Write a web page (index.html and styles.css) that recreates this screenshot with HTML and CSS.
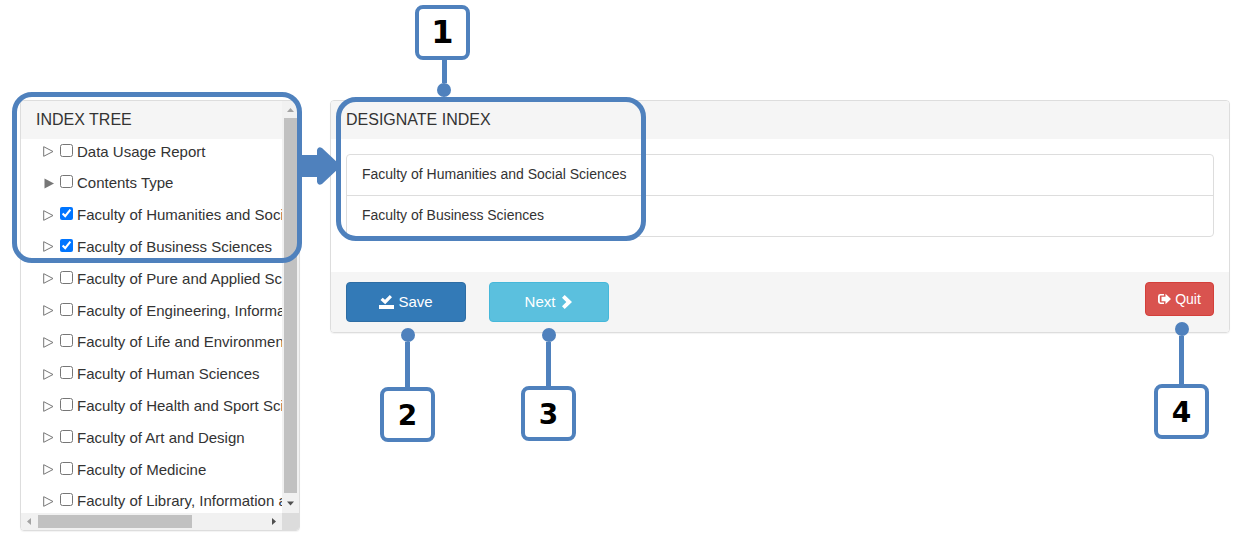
FILE: index.html
```
<!DOCTYPE html>
<html lang="en">
<head>
<meta charset="utf-8">
<title>Designate Index</title>
<link rel="stylesheet" href="styles.css">
</head>
<body>
<main class="page">
  <section class="panel tree">
    <div class="tree-view">
      <h2 class="panel-title">INDEX TREE</h2>
      <ul class="tree-list">
        <li class="node"><svg class="caret" viewBox="0 0 11 11"><path d="M.7 .7V10.3L10 5.5Z"/></svg><input type="checkbox" id="n1"><label for="n1">Data Usage Report</label></li>
        <li class="node"><svg class="caret solid" viewBox="0 0 11 11"><path d="M1.5 .5V10.5L11 5.5Z"/></svg><input type="checkbox" id="n2"><label for="n2">Contents Type</label></li>
        <li class="node"><svg class="caret" viewBox="0 0 11 11"><path d="M.7 .7V10.3L10 5.5Z"/></svg><input type="checkbox" id="n3" checked><label for="n3">Faculty of Humanities and Social Sciences</label></li>
        <li class="node"><svg class="caret" viewBox="0 0 11 11"><path d="M.7 .7V10.3L10 5.5Z"/></svg><input type="checkbox" id="n4" checked><label for="n4">Faculty of Business Sciences</label></li>
        <li class="node"><svg class="caret" viewBox="0 0 11 11"><path d="M.7 .7V10.3L10 5.5Z"/></svg><input type="checkbox" id="n5"><label for="n5">Faculty of Pure and Applied Sciences</label></li>
        <li class="node"><svg class="caret" viewBox="0 0 11 11"><path d="M.7 .7V10.3L10 5.5Z"/></svg><input type="checkbox" id="n6"><label for="n6">Faculty of Engineering, Information and Systems</label></li>
        <li class="node"><svg class="caret" viewBox="0 0 11 11"><path d="M.7 .7V10.3L10 5.5Z"/></svg><input type="checkbox" id="n7"><label for="n7">Faculty of Life and Environmental Sciences</label></li>
        <li class="node"><svg class="caret" viewBox="0 0 11 11"><path d="M.7 .7V10.3L10 5.5Z"/></svg><input type="checkbox" id="n8"><label for="n8">Faculty of Human Sciences</label></li>
        <li class="node"><svg class="caret" viewBox="0 0 11 11"><path d="M.7 .7V10.3L10 5.5Z"/></svg><input type="checkbox" id="n9"><label for="n9">Faculty of Health and Sport Sciences</label></li>
        <li class="node"><svg class="caret" viewBox="0 0 11 11"><path d="M.7 .7V10.3L10 5.5Z"/></svg><input type="checkbox" id="n10"><label for="n10">Faculty of Art and Design</label></li>
        <li class="node"><svg class="caret" viewBox="0 0 11 11"><path d="M.7 .7V10.3L10 5.5Z"/></svg><input type="checkbox" id="n11"><label for="n11">Faculty of Medicine</label></li>
        <li class="node"><svg class="caret" viewBox="0 0 11 11"><path d="M.7 .7V10.3L10 5.5Z"/></svg><input type="checkbox" id="n12"><label for="n12">Faculty of Library, Information and Media Science</label></li>
      </ul>
    </div>
    <div class="bar bar-y">
      <svg class="bar-arrow" viewBox="0 0 17 17"><path fill="#a3a3a3" d="M5 11H12L8.500 7Z"/></svg>
      <div class="thumb"></div>
      <svg class="bar-arrow" viewBox="0 0 17 17"><path fill="#505050" d="M5 7H12L8.500 11Z"/></svg>
    </div>
    <div class="bar bar-x">
      <svg class="bar-arrow" viewBox="0 0 17 17"><path fill="#a3a3a3" d="M10 5V12L6 8.500Z"/></svg>
      <div class="track"><div class="thumb"></div></div>
      <svg class="bar-arrow" viewBox="0 0 17 17"><path fill="#505050" d="M7 5V12L11 8.500Z"/></svg>
    </div>
    <div class="bar-corner"></div>
  </section>

  <section class="panel">
    <h2 class="panel-title">DESIGNATE INDEX</h2>
    <div class="panel-body">
      <ul class="chosen">
        <li>Faculty of Humanities and Social Sciences</li>
        <li>Faculty of Business Sciences</li>
      </ul>
    </div>
    <div class="panel-footer">
      <button type="button" class="btn save"><svg width="15" height="14" viewBox="0 0 15 14"><path fill="#fff" d="M0 10H15V14H0ZM1.500 5 3.700 2.800 6 4.800 10.800 0 13 2.200 6.200 9.200Z"/></svg>Save</button>
      <button type="button" class="btn next">Next<svg width="12" height="14" viewBox="0 0 12 14"><path fill="#fff" d="M1 2.700 3.700 0 11 7 3.700 14 1 11.300 5.300 7Z"/></svg></button>
      <button type="button" class="btn quit"><svg width="13" height="12" viewBox="0 0 13 12"><path fill="#fff" d="M6 1V2.600H2.600Q1.800 2.600 1.800 3.400V8.600Q1.800 9.400 2.600 9.400H6V11H2.500Q0 11 0 8.600V3.400Q0 1 2.500 1ZM7.500 .8 13 6 7.500 11.200V8.200H3.500V3.800H7.500Z"/></svg>Quit</button>
    </div>
  </section>

  <div class="outline outline-tree"></div>
  <svg class="flow-arrow" viewBox="0 0 38 38"><path fill="#4f81bd" d="M0 8H16V3Q17-1 21 1L38 17V21L21 37Q17 39 16 35V30H0Z"/></svg>
  <div class="outline outline-index"></div>

  <div class="callout above c1"><span class="tag">1</span><span class="stem"></span><span class="dot"></span></div>
  <div class="callout c2"><span class="dot"></span><span class="stem"></span><span class="tag">2</span></div>
  <div class="callout c3"><span class="dot"></span><span class="stem"></span><span class="tag">3</span></div>
  <div class="callout c4"><span class="dot"></span><span class="stem"></span><span class="tag">4</span></div>
</main>
</body>
</html>
```
FILE: styles.css
```
* { box-sizing: border-box; }

body {
  margin: 0;
  background: #fff;
  color: #333;
  font: 14px/20px "Liberation Sans", Arial, sans-serif;
}

ul { margin: 0; padding: 0; list-style: none; }
svg { display: block; flex: none; }

.page {
  position: relative;
  display: grid;
  grid-template-columns: 280px 1fr;
  gap: 30px;
  align-items: start;
  padding: 100px 27px 19px 20px;
}

.panel {
  border: 1px solid #ddd;
  border-radius: 4px;
  box-shadow: 0 1px 1px rgba(0, 0, 0, .05);
  overflow: hidden;
}

.panel-title {
  margin: 0;
  padding: 9px 15px;
  background: #f5f5f5;
  font-size: 16px;
  font-weight: 400;
  line-height: 20px;
}

/* Index tree */
.tree {
  display: grid;
  grid-template-columns: 1fr 17px;
  grid-template-rows: 412px 17px;
}

.tree-view { display: flex; flex-direction: column; overflow: hidden; }

.tree-list {
  flex: 1;
  display: flex;
  flex-direction: column;
  justify-content: space-between;
  margin-bottom: -1px;
}

.node {
  display: flex;
  align-items: center;
  height: 25px;
  padding-left: 22px;
  font-size: 15px;
  white-space: nowrap;
}

.node input { flex: none; width: 13px; height: 13px; margin: 0 4px 3px 6px; }

.caret { width: 11px; height: 11px; fill: none; stroke: #777; }
.caret.solid { fill: #777; stroke: none; }

.bar { display: flex; background: #f1f1f1; }
.bar-y { flex-direction: column; }
.bar-arrow { width: 17px; height: 17px; }
.bar .thumb { background: #c1c1c1; }
.bar-y .thumb { flex: 1; margin: 0 2px; }
.bar-y .bar-arrow:last-child { height: 20px; }
.track { flex: 1; display: flex; padding: 2px 0; }
.track .thumb { width: 68%; }
.bar-corner { background: #dcdcdc; }

/* Designate index */
.panel-body { padding: 15px 15px 35px; }

.chosen { border: 1px solid #ddd; border-radius: 4px; }
.chosen li { padding: 9px 15px 11px; }
.chosen li + li { border-top: 1px solid #ddd; }

.panel-footer {
  display: flex;
  align-items: flex-start;
  gap: 23px;
  padding: 10px 15px;
  background: #f5f5f5;
}

.btn {
  display: flex;
  align-items: center;
  justify-content: center;
  gap: 4px;
  width: 120px;
  height: 40px;
  padding: 0;
  border: 1px solid;
  border-radius: 4px;
  color: #fff;
  font: 15px/20px "Liberation Sans", Arial, sans-serif;
}

.save { background: #337ab7; border-color: #2e6da4; }
.next { gap: 6px; background: #5bc0de; border-color: #46b8da; }
.quit {
  width: 69px;
  height: 34px;
  margin-left: auto;
  background: #d9534f;
  border-color: #d43f3a;
  font-size: 14px;
}

/* Annotations laid over the panels */
.outline {
  position: absolute;
  border: 5px solid #4f81bd;
  border-radius: 20px;
  pointer-events: none;
}

.outline-tree { left: 12px; top: 92px; width: 290px; height: 171px; }
.outline-index { left: 336px; top: 97px; width: 310px; height: 144px; }
.flow-arrow { position: absolute; left: 301px; top: 147px; width: 38px; height: 38px; }

.callout {
  position: absolute;
  display: flex;
  flex-direction: column;
  align-items: center;
  width: 55px;
}

.tag {
  width: 55px;
  height: 55px;
  border: 4px solid #4f81bd;
  border-radius: 8px;
  background: #fff;
  color: #000;
  font: bold 28px/50px "DejaVu Sans", Verdana, sans-serif;
  text-align: center;
}

.above .tag { font-size: 32px; line-height: 46px; }
.dot { width: 14px; height: 14px; border-radius: 50%; background: #4f81bd; }
.stem { flex: 1; width: 5px; background: #4f81bd; }

.c1 { left: 415px; top: 5px; height: 92px; }
.above .stem, .above .dot { margin-left: 3px; }
.c2 { left: 380px; top: 328px; height: 114px; }
.c3 { left: 521px; top: 328px; height: 113px; }
.c4 { right: 48px; top: 322px; height: 117px; }
```
